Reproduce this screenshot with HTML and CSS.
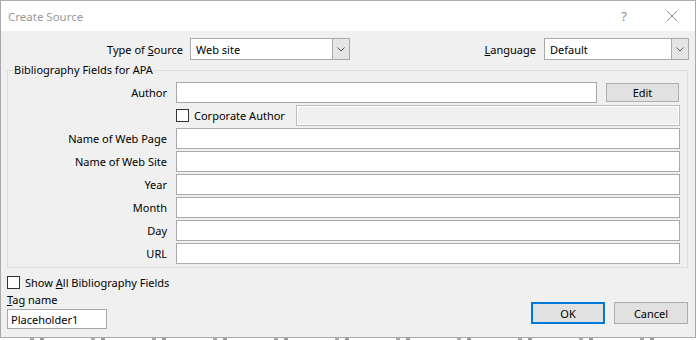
FILE: index.html
```html
<!DOCTYPE html>
<html lang="en">
<head>
  <meta charset="UTF-8" />
  <title>Create Source</title>
  <link rel="stylesheet" href="styles.css">
</head>
<body>
  <div class="window">
    <div class="titlebar">
      <span class="title">Create Source</span>
      <span class="help">?</span>
      <svg class="close" width="12" height="12" viewBox="0 0 12 12">
        <path d="M1 1 L11 11 M11 1 L1 11" stroke="#8c8c8c" stroke-width="1" fill="none"/>
      </svg>
    </div>

    <div class="content">
      <div class="top-row">
        <label class="lbl">Type of <u>S</u>ource</label>
        <div class="combo">
          <span class="combo-text">Web site</span>
          <span class="drop"><svg width="8" height="5" viewBox="0 0 8 5"><path d="M0.5 0.5 L4 4 L7.5 0.5" stroke="#555" fill="none"/></svg></span>
        </div>
        <label class="lbl lang"><u>L</u>anguage</label>
        <div class="combo">
          <span class="combo-text">Default</span>
          <span class="drop"><svg width="8" height="5" viewBox="0 0 8 5"><path d="M0.5 0.5 L4 4 L7.5 0.5" stroke="#555" fill="none"/></svg></span>
        </div>
      </div>

      <fieldset class="group">
        <legend>Bibliography Fields for APA</legend>
        <div class="fields">
          <label class="field-lbl">Author</label>
          <div class="row-flex">
            <div class="textbox author"></div>
            <button class="btn edit">Edit</button>
          </div>

          <span></span>
          <div class="row-flex">
            <label class="check corp"><span class="box"></span><span>Corporate Author</span></label>
            <div class="textbox disabled"></div>
          </div>

          <label class="field-lbl">Name of Web Page</label>
          <div class="textbox"></div>

          <label class="field-lbl">Name of Web Site</label>
          <div class="textbox"></div>

          <label class="field-lbl">Year</label>
          <div class="textbox"></div>

          <label class="field-lbl">Month</label>
          <div class="textbox"></div>

          <label class="field-lbl">Day</label>
          <div class="textbox"></div>

          <label class="field-lbl">URL</label>
          <div class="textbox"></div>
        </div>
      </fieldset>

      <div class="bottom">
        <div class="bottom-left">
          <label class="check"><span class="box"></span><span>Show <u>A</u>ll Bibliography Fields</span></label>
          <div class="tag-lbl"><u>T</u>ag name</div>
          <div class="textbox tag">Placeholder1</div>
        </div>
        <div class="buttons">
          <button class="btn ok">OK</button>
          <button class="btn">Cancel</button>
        </div>
      </div>
    </div>
  </div>
  <div class="under"></div>
</body>
</html>
```

FILE: styles.css
```css
body {
  margin: 0;
  background-color: #fff;
  font-family: "Noto Sans", "Open Sans", sans-serif;
  font-size: 11px;
  color: #000;
}

.window {
  width: 696px;
  height: 337px;
  box-sizing: border-box;
  border: 1px solid #a9a9a9;
  border-bottom: none;
  background-color: #f0f0f0;
}

.titlebar {
  height: 30px;
  background-color: #fff;
  display: flex;
  align-items: center;
  padding-left: 7px;
}

.title {
  color: #999;
  font-size: 11.5px;
  flex: 1;
}

.help {
  color: #8c8c8c;
  font-size: 13px;
  margin-right: 39px;
}

.close {
  margin-right: 17px;
}

.content {
  padding-top: 7px;
}

.top-row {
  display: grid;
  grid-template-columns: 189px 160px 194px 145px;
  height: 22px;
  align-items: center;
}

.lbl {
  text-align: right;
  padding-right: 7px;
}

.lbl.lang {
  padding-right: 8px;
}

.combo {
  height: 22px;
  box-sizing: border-box;
  border: 1px solid #a9a9a9;
  background-color: #fff;
  display: flex;
  align-items: center;
}

.combo-text {
  flex: 1;
  padding-left: 5px;
}

.drop {
  width: 17px;
  height: 20px;
  box-sizing: border-box;
  border-left: 1px solid #a9a9a9;
  background-color: #e5e5e5;
  display: flex;
  align-items: center;
  justify-content: center;
}

.group {
  margin: 2px 7px 0 6px;
  padding: 4px 7px 3px 0;
  border: 1px solid #dcdcdc;
  min-width: 0;
}

.group legend {
  margin-left: 5px;
  padding: 0 1px;
  line-height: 16px;
}

.fields {
  display: grid;
  grid-template-columns: 159px 1fr;
  grid-auto-rows: 21px;
  column-gap: 9px;
  row-gap: 2px;
  align-items: center;
}

.field-lbl {
  text-align: right;
}

.row-flex {
  display: flex;
  align-items: center;
  height: 21px;
}

.textbox {
  height: 21px;
  box-sizing: border-box;
  border: 1px solid #a9a9a9;
  background-color: #fff;
  display: flex;
  align-items: center;
  padding-left: 4px;
}

.textbox.author {
  width: 421px;
}

.textbox.disabled {
  flex: 1;
  background-color: #f0f0f0;
  border-color: #bcbcbc;
  box-shadow: inset 0 0 0 1px #fff;
}

.check {
  display: flex;
  align-items: center;
}

.check.corp {
  width: 120px;
  height: 21px;
}

.box {
  width: 13px;
  height: 13px;
  box-sizing: border-box;
  border: 1px solid #333;
  background-color: #fff;
  margin-right: 5px;
}

.btn {
  font-family: inherit;
  font-size: 11px;
  color: #000;
  height: 22px;
  width: 74px;
  border: 1px solid #adadad;
  background-color: #e1e1e1;
  padding: 0;
}

.btn.edit {
  width: 73px;
  height: 19px;
  margin-left: 9px;
}

.btn.ok {
  border: 2px solid #0078d7;
  margin-right: 9px;
}

.bottom {
  display: flex;
  align-items: flex-end;
  justify-content: space-between;
  padding: 8px 7px 0 6px;
}

.bottom-left .check {
  height: 13px;
}

.tag-lbl {
  margin-top: 2px;
  line-height: 18px;
}

.textbox.tag {
  width: 100px;
  height: 20px;
  padding-left: 3px;
}

.buttons {
  display: flex;
  margin-bottom: 5px;
}

.under {
  width: 696px;
  height: 3px;
  border-top: 1px solid #a9a9a9;
  background: repeating-linear-gradient(90deg, #fff 0 30px, #aaa 30px 34px, #fff 34px 40px, #999 40px 44px, #fff 44px 61px);
}
```
